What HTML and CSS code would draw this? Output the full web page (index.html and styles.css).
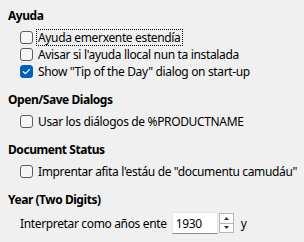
FILE: index.html
```html
<!DOCTYPE html>
<html lang="ast">
<head>
    <meta charset="UTF-8">
    <title>Opciones xenerales</title>
    <link rel="stylesheet" href="styles.css">
</head>
<body>
    <div class="panel">
        <!-- Ayuda -->
        <section class="group">
            <h2 class="group-title">Ayuda</h2>
            <label class="check">
                <span class="box"></span>
                <span class="text focused">Ayuda emerxente estendía</span>
            </label>
            <label class="check">
                <span class="box"></span>
                <span class="text">Avisar si l'ayuda llocal nun ta instalada</span>
            </label>
            <label class="check">
                <span class="box checked">
                    <svg viewBox="0 0 13 13" width="13" height="13"><path d="M3.4 6.7 L5.5 8.7 L9.6 4.4" fill="none" stroke="#fff" stroke-width="1.2" stroke-linecap="round" stroke-linejoin="round"/></svg>
                </span>
                <span class="text">Show "Tip of the Day" dialog on start-up</span>
            </label>
        </section>

        <section class="group">
            <h2 class="group-title">Open/Save Dialogs</h2>
            <label class="check">
                <span class="box"></span>
                <span class="text">Usar los diálogos de %PRODUCTNAME</span>
            </label>
        </section>

        <section class="group">
            <h2 class="group-title">Document Status</h2>
            <label class="check">
                <span class="box"></span>
                <span class="text">Imprentar afita l'estáu de "documentu camudáu"</span>
            </label>
        </section>

        <section class="group">
            <h2 class="group-title">Year (Two Digits)</h2>
            <div class="year-row">
                <span class="year-label">Interpretar como años ente</span>
                <div class="spin">
                    <span class="spin-field">1930</span>
                    <span class="spin-buttons">
                        <span class="spin-btn"><svg viewBox="0 0 11 7" width="11" height="7"><path d="M3 5 L5.5 2 L8 5 Z" fill="#333"/></svg></span>
                        <span class="spin-btn"><svg viewBox="0 0 11 7" width="11" height="7"><path d="M3 2 L5.5 5 L8 2 Z" fill="#333"/></svg></span>
                    </span>
                </div>
                <span class="year-after">y</span>
            </div>
        </section>
    </div>
</body>
</html>
```

FILE: styles.css
```css
body {
    margin: 0;
    background-color: #f0f0f0;
    color: #000;
    font-family: "Segoe UI", "Noto Sans", "Open Sans", sans-serif;
    font-size: 12px;
    letter-spacing: -0.35px;
}

.panel {
    padding: 8px 8px 0 8px;
    display: flex;
    flex-direction: column;
    gap: 12px;
}

.group {
    display: flex;
    flex-direction: column;
}

.group-title {
    margin: 0 0 5px 0;
    font-size: 12px;
    font-weight: bold;
    line-height: 16px;
    letter-spacing: -0.45px;
}

.check {
    display: flex;
    align-items: center;
    gap: 4px;
    height: 17px;
    padding-left: 12px;
    white-space: nowrap;
}

.box {
    width: 11px;
    height: 11px;
    border: 1px solid #5d5d5d;
    border-radius: 3px;
    background-color: #f6f6f6;
    flex-shrink: 0;
    display: flex;
}

.box.checked {
    border-color: #005fb8;
    background-color: #005fb8;
}

.box svg {
    margin: -1px;
}

.text {
    line-height: 15px;
    padding: 0 1px;
    margin-left: -1px;
    border: 1px dotted transparent;
}

/* Rectángulo de foco punteado */
.text.focused {
    border-color: #000;
}

.year-row {
    display: flex;
    align-items: center;
    height: 22px;
    padding-left: 12px;
    margin-top: -1px;
}

.year-label {
    margin-right: 5px;
}

.spin {
    display: flex;
    align-items: center;
    gap: 1px;
}

.spin-field {
    box-sizing: border-box;
    width: 46px;
    height: 22px;
    padding: 2px 3px 0 3px;
    line-height: 18px;
    background-color: #fff;
    border: 1px solid #e5e5e5;
    border-bottom-color: #8a8a8a;
}

.spin-buttons {
    display: flex;
    flex-direction: column;
    width: 13px;
    height: 18px;
    border: 1px solid #b5b5b5;
    background-color: #fdfdfd;
}

.spin-btn {
    flex: 1;
    display: flex;
    align-items: center;
    justify-content: center;
}

.spin-btn + .spin-btn {
    border-top: 1px solid #b5b5b5;
}

.year-after {
    margin-left: 7px;
}
```
